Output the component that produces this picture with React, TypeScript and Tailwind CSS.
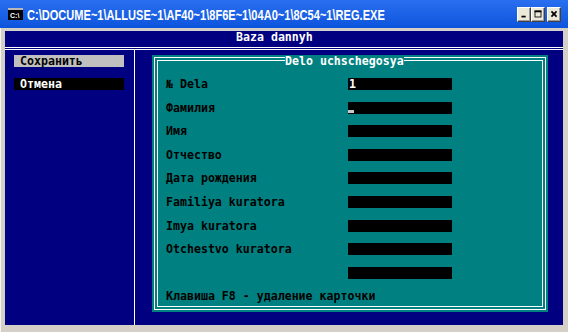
import React from "react";

const fields = [
  "№ Dela",
  "Фамилия",
  "Имя",
  "Отчество",
  "Дата рождения",
  "Familiya kuratora",
  "Imya kuratora",
  "Otchestvo kuratora",
  "",
];

function TitleBar() {
  return (
    <div className="h-[28px] shrink-0 flex items-center bg-linear-to-b from-[#2a6ff0] to-[#0a54dc]">
      {/* console icon */}
      <div className="ml-[8px] w-[15px] h-[12px] bg-black border-t-[2px] border-[#b8b8b8] flex items-center pl-[2px]">
        <span className="text-white text-[7px] leading-[7px] font-bold font-['Liberation_Sans',sans-serif]">
          C:\
        </span>
      </div>
      <div className="ml-[4px] w-[380px] overflow-visible whitespace-nowrap">
        <span className="inline-block origin-left scale-x-[0.79] text-white text-[14px] leading-[16px] font-bold font-['Liberation_Sans',sans-serif]">
          {"C:\\DOCUME~1\\ALLUSE~1\\AF40~1\\8F6E~1\\04A0~1\\8C54~1\\REG.EXE"}
        </span>
      </div>
      <div className="ml-auto mr-[7px] flex items-center">
        <WinButton>
          <rect x="4" y="9" width="5" height="2" fill="#000" />
        </WinButton>
        <WinButton>
          <rect x="3.5" y="3.5" width="7" height="7" fill="none" stroke="#000" />
          <rect x="3" y="3" width="8" height="2" fill="#000" />
        </WinButton>
        <div className="w-[2px]" />
        <WinButton>
          <path d="M4 4 L10 10 M10 4 L4 10" stroke="#000" strokeWidth="2" />
        </WinButton>
      </div>
    </div>
  );
}

function WinButton({ children }: { children: React.ReactNode }) {
  return (
    <div className="w-[14px] h-[15px] bg-[#ece9d8] border border-t-white border-l-white border-r-[#404040] border-b-[#404040] shadow-[inset_-1px_-1px_#9a9a9a] flex items-center justify-center">
      <svg width="14" height="14" viewBox="0 0 14 14">
        {children}
      </svg>
    </div>
  );
}

export default function App() {
  return (
    <div className="w-[568px] h-[332px] bg-[#d4d0c8] flex flex-col overflow-hidden">
      <TitleBar />
      <div className="flex-1 pt-[3px] pb-[7px] pl-[4px] pr-[5px] border-l border-[#f4f4f4]">
        <div className="h-full bg-[#000080] flex flex-col text-[11.6px] leading-[12px] font-bold font-['DejaVu_Sans_Mono',monospace]">
          {/* header */}
          <div className="h-[16px] shrink-0 pl-[231px] text-white">Baza dannyh</div>

          {/* body */}
          <div className="flex-1 flex border-t-[3px] border-double border-white">
            {/* menu */}
            <div className="w-[129px] pt-[5px]">
              <div className="ml-[9px] w-[110px] h-[12px] bg-[#c0c0c0] text-black pl-[6px]">
                Сохранить
              </div>
              <div className="ml-[9px] mt-[11px] w-[110px] h-[12px] bg-black text-white pl-[6px]">
                Отмена
              </div>
            </div>

            {/* dialog area */}
            <div className="flex-1 border-l border-white pt-[5px] pl-[17px]">
              <div className="relative w-[396px] h-[257px] bg-[#008080] p-[2px]">
                <div className="h-full border border-white p-[2px]">
                  <div className="h-full border border-white pt-[17px] pl-[8px] flex flex-col gap-[11.6px]">
                    {fields.map((label, i) => (
                      <div key={i} className="flex h-[12px]">
                        <div className="w-[182px] text-black whitespace-pre">{label}</div>
                        <div className="relative w-[104px] h-[12px] bg-black text-white pl-[1px]">
                          {i === 0 && "1"}
                          {i === 1 && (
                            <div className="absolute left-[0px] bottom-[1px] w-[6px] h-[3px] bg-[#c8c8c8]" />
                          )}
                        </div>
                      </div>
                    ))}
                    <div className="h-[12px] text-black whitespace-pre">Клавиша F8 - удаление карточки</div>
                  </div>
                </div>
                <div className="absolute top-0 left-[133px] h-[12px] bg-[#008080] text-white whitespace-pre">
                  Delo uchschegosya
                </div>
              </div>
            </div>
          </div>
        </div>
      </div>
    </div>
  );
}
